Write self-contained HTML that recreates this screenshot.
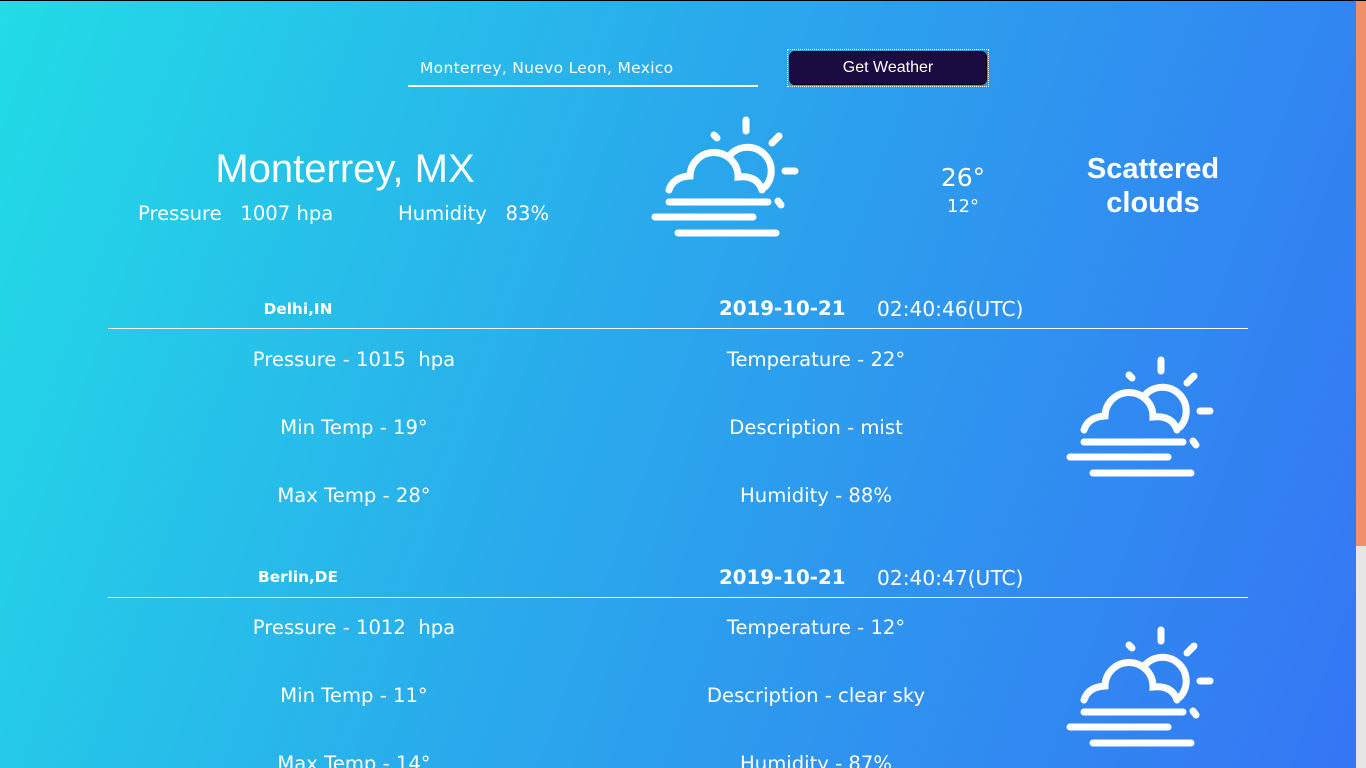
<!DOCTYPE html>
<html><head><meta charset="utf-8"><style>
*{margin:0;padding:0;box-sizing:border-box}
html,body{width:1366px;height:768px;overflow:hidden}
body{position:relative;background:linear-gradient(110deg,#22dce6 0%,#2aa9ec 45%,#3575f4 100%);color:#fff;font-family:"DejaVu Sans","Liberation Sans",sans-serif;border-top:1px solid #000}
.a{position:absolute;white-space:nowrap}
.c{transform:translateX(-50%)}
.sb{position:absolute;left:1356px;top:0;width:10px;height:768px;background:#e6e6e6}
.th{position:absolute;left:1356px;top:0;width:10px;height:545px;background:#f0906a}
.row{font-size:19.6px}
.hr{position:absolute;left:108px;width:1140px;height:1px;background:#fff}
svg{position:absolute}
</style></head><body>
<div class="a" style="left:420px;top:58px;font-size:15.5px;letter-spacing:0.3px">Monterrey, Nuevo Leon, Mexico</div>
<div class="a" style="left:408px;top:84px;width:350px;height:2px;background:#fff"></div>
<div class="a" style="left:787px;top:48px;width:202px;height:38px;border:1px dotted #fff;padding:1px"><div style="width:100%;height:100%;background:#1a0b40;border-radius:6px;border:1px solid #000;font-family:'Liberation Sans',sans-serif;font-size:16px;text-align:center;line-height:32px">Get Weather</div></div>

<div class="a c" style="left:345px;top:146px;font-size:40px;font-family:'Liberation Sans',sans-serif">Monterrey, MX</div>
<div class="a" style="left:138px;top:201px;font-size:19.6px">Pressure&nbsp;&nbsp; 1007 hpa</div>
<div class="a" style="left:398px;top:201px;font-size:19.6px">Humidity&nbsp;&nbsp; 83%</div>
<div class="a c" style="left:963px;top:162px;font-size:25px">26°</div>
<div class="a c" style="left:963px;top:195px;font-size:18px">12°</div>
<div class="a" style="left:1053px;top:151px;width:200px;text-align:center;font-size:29px;font-weight:bold;line-height:34px;font-family:'Liberation Sans',sans-serif;white-space:normal">Scattered clouds</div>

<svg width="0" height="0"><defs><g id="ic" fill="none" stroke="#fff" stroke-width="7" stroke-linecap="round">
<path d="M105 9V20M73 24L76 27M131 32L138 25M144 60H154M137 90L140 94"/>
<path d="M89 44A21 21 0 1 1 124 76"/>
<path d="M28 79Q32 66 49 65A24 24 0 0 1 97 66Q116 64 121 79"/>
<path d="M28 91H127M14 106H112M37 122H135"/>
</g></defs></svg>
<svg style="left:641px;top:110px" width="170" height="135"><use href="#ic"/></svg>
<svg style="left:1056px;top:350px" width="170" height="135"><use href="#ic"/></svg>
<svg style="left:1056px;top:620px" width="170" height="135"><use href="#ic"/></svg>

<div class="a c" style="left:298px;top:299px;font-size:15.3px;font-weight:bold">Delhi,IN</div>
<div class="a" style="left:719px;top:296px;font-size:19.8px;font-weight:bold">2019-10-21</div>
<div class="a" style="left:877px;top:296px;font-size:20.2px">02:40:46(UTC)</div>
<div class="hr" style="top:327px"></div>
<div class="a c row" style="left:354px;top:347px">Pressure - 1015&nbsp; hpa</div>
<div class="a c row" style="left:816px;top:347px">Temperature - 22°</div>
<div class="a c row" style="left:354px;top:415px">Min Temp - 19°</div>
<div class="a c row" style="left:816px;top:415px">Description - mist</div>
<div class="a c row" style="left:354px;top:483px">Max Temp - 28°</div>
<div class="a c row" style="left:816px;top:483px">Humidity - 88%</div>

<div class="a c" style="left:298px;top:567px;font-size:15.3px;font-weight:bold">Berlin,DE</div>
<div class="a" style="left:719px;top:565px;font-size:19.8px;font-weight:bold">2019-10-21</div>
<div class="a" style="left:877px;top:565px;font-size:20.2px">02:40:47(UTC)</div>
<div class="hr" style="top:596px"></div>
<div class="a c row" style="left:354px;top:615px">Pressure - 1012&nbsp; hpa</div>
<div class="a c row" style="left:816px;top:615px">Temperature - 12°</div>
<div class="a c row" style="left:354px;top:683px">Min Temp - 11°</div>
<div class="a c row" style="left:816px;top:683px">Description - clear sky</div>
<div class="a c row" style="left:354px;top:751px">Max Temp - 14°</div>
<div class="a c row" style="left:816px;top:751px">Humidity - 87%</div>

<div class="sb"></div><div class="th"></div>
</body></html>
